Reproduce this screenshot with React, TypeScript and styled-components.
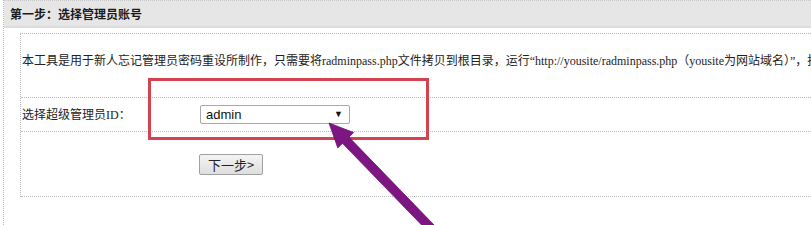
import * as React from "react";
import styled, { createGlobalStyle } from "styled-components";

const GlobalStyle = createGlobalStyle`
  html, body {
    margin: 0;
    padding: 0;
    background: #fff;
    overflow: hidden;
  }
  body {
    font-family: "Liberation Serif", "Noto Sans CJK SC", serif;
    font-size: 12px;
    color: #222;
  }
`;

const Page = styled.div`
  position: relative;
  width: 811px;
  height: 225px;
  overflow: hidden;
`;

const Panel = styled.div`
  margin-left: 3px;
  height: 100%;
  border-left: 1px dotted #bbb;
`;

const Header = styled.div`
  box-sizing: border-box;
  height: 28px;
  padding-left: 6px;
  display: flex;
  align-items: center;
  background: #e6e6e6;
  border-top: 1px dotted #c8c8c8;
  border-bottom: 2px solid #dcdcdc;
  font-family: "Noto Sans CJK SC", sans-serif;
  font-weight: bold;
  font-size: 12px;
  color: #1a1a1a;
  white-space: nowrap;
`;

const Body = styled.div`
  padding: 5px 0 0 16px;
`;

const Table = styled.div`
  border-top: 1px dotted #bbb;
  border-left: 1px dotted #bbb;
  width: 1000px;
`;

const Row = styled.div<{ $height: number }>`
  box-sizing: border-box;
  height: ${(p) => p.$height}px;
  display: grid;
  grid-template-columns: 178px 1fr;
  align-items: center;
  border-bottom: 1px dotted #bbb;
  padding-left: 1px;
`;

const Intro = styled.div`
  grid-column: 1 / -1;
  align-self: start;
  padding-top: 19px;
  white-space: nowrap;
  line-height: 16px;
`;

const Label = styled.div`
  line-height: 16px;
`;

const SelectBox = styled.div`
  position: relative;
  box-sizing: border-box;
  width: 150px;
  height: 19px;
  border: 1px solid #a8a8a8;
  border-radius: 2px;
  background: #fff;
  font-family: "Liberation Sans", Arial, sans-serif;
  font-size: 13px;
  line-height: 17px;
  padding-left: 5px;
  color: #111;
`;

const Caret = styled.span`
  position: absolute;
  right: 6px;
  top: 0;
  font-size: 9px;
  color: #111;
`;

const Cell = styled.div`
  grid-column: 2;
`;

const NextButton = styled.button`
  box-sizing: border-box;
  width: 64px;
  height: 21px;
  padding: 0;
  border: 1px solid #a0a0a0;
  border-radius: 2px;
  background: linear-gradient(#f4f4f4, #dedede);
  font-family: "Noto Sans CJK SC", sans-serif;
  font-size: 13px;
  line-height: 19px;
  color: #222;
  margin-left: -1px;
`;

const Highlight = styled.div`
  position: absolute;
  left: 148px;
  top: 78px;
  width: 281px;
  height: 62px;
  box-sizing: border-box;
  border: 3px solid #d4434d;
`;

const Pointer = styled.svg`
  position: absolute;
  left: 0;
  top: 0;
  pointer-events: none;
`;

export default function App() {
  return (
    <Page>
      <GlobalStyle />
      <Panel>
        <Header>第一步：选择管理员账号</Header>
        <Body>
          <Table>
            <Row $height={64}>
              <Intro>
                本工具是用于新人忘记管理员密码重设所制作，只需要将radminpass.php文件拷贝到根目录，运行“http://yousite/radminpass.php（yousite为网站域名）”，执行即可。
              </Intro>
            </Row>
            <Row $height={34}>
              <Label>选择超级管理员ID：</Label>
              <SelectBox>
                admin
                <Caret>▼</Caret>
              </SelectBox>
            </Row>
            <Row $height={65}>
              <Cell>
                <NextButton>下一步&gt;</NextButton>
              </Cell>
            </Row>
          </Table>
        </Body>
      </Panel>
      <Highlight />
      <Pointer width="811" height="225" viewBox="0 0 811 225">
        <polygon
          points="329,123 353.6,132.5 348.9,137.1 435.9,226.9 429.5,233.1 342.5,143.3 337.8,147.9"
          fill="#7d1683"
          stroke="#6a0f70"
          strokeWidth="0.8"
          strokeLinejoin="round"
        />
      </Pointer>
    </Page>
  );
}
